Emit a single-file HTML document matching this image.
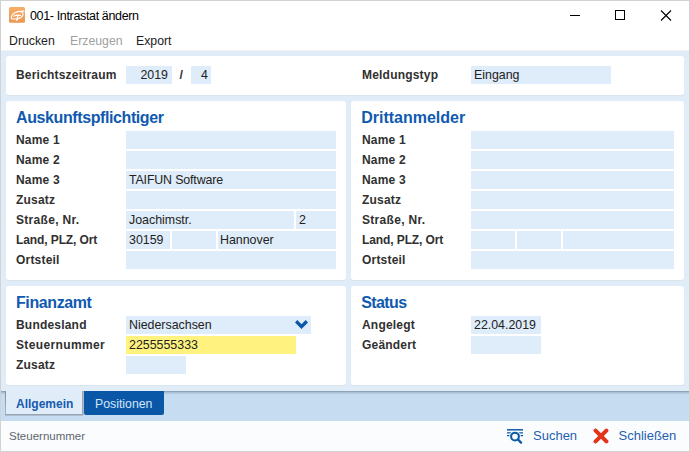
<!DOCTYPE html>
<html><head><meta charset="utf-8">
<style>
*{margin:0;padding:0;box-sizing:border-box}
html,body{width:690px;height:452px;overflow:hidden;background:#fff}
body{position:relative;font-family:"Liberation Sans",sans-serif;font-size:12px;color:#222}
.a{position:absolute;white-space:nowrap}
.brd{position:absolute;background:#d2d2d2}
.main{position:absolute;left:1px;top:51px;width:688px;height:340px;background:#e0edf9}
.pnl{position:absolute;background:#fff;border-radius:3px;box-shadow:0 1px 0 #dbe3eb}
.ttl{position:absolute;font-size:16px;font-weight:bold;color:#0f5ab0;line-height:18px;letter-spacing:-0.4px}
.lbl{position:absolute;font-weight:bold;font-size:12px;color:#303030;line-height:18px;letter-spacing:0.2px}
.fld{position:absolute;background:#dfecf9;height:18px;line-height:18px;font-size:12.4px;color:#222;padding-left:3px;white-space:nowrap}
.tabbar{position:absolute;left:1px;top:391px;width:688px;height:30px;background:#c6dcf0}
.status{position:absolute;left:1px;top:421px;width:688px;height:30px;background:#fbfcfd}
</style></head><body>
<!-- window borders -->
<div class="brd" style="left:0;top:0;width:690px;height:1px"></div>
<div class="brd" style="left:0;top:0;width:1px;height:452px"></div>
<div class="brd" style="left:689px;top:0;width:1px;height:452px"></div>
<div class="brd" style="left:0;top:451px;width:690px;height:1px"></div>

<!-- title bar -->
<svg class="a" style="left:9px;top:7px" width="16" height="16" viewBox="0 0 16 16">
  <defs><linearGradient id="og" x1="0" y1="0" x2="0" y2="1"><stop offset="0" stop-color="#f6ae69"/><stop offset="1" stop-color="#ec9751"/></linearGradient></defs>
  <rect x="0" y="0" width="16" height="15.8" rx="1.5" fill="url(#og)"/>
  <g stroke="#fff" fill="none" stroke-linecap="round">
    <path d="M2.6 11.6 C1.6 9.2 3.8 5.6 9 4.6 L15 4.1" stroke-width="1.1"/>
    <path d="M12.8 5.2 C15 6.2 14.4 9.2 11 10.9 C9 11.9 6 12.3 2.6 11.8" stroke-width="1.1"/>
    <path d="M4.8 9.2 C6.5 8 9.5 8 11.5 8.4" stroke-width="1.2"/>
    <path d="M9 8.4 L7.8 13.3" stroke-width="1.3"/>
  </g>
</svg>
<div class="a" style="left:30px;top:9px;font-size:12.5px;letter-spacing:-0.35px;line-height:14px;color:#000">001- Intrastat ändern</div>
<!-- window controls -->
<div class="a" style="left:570px;top:15px;width:10px;height:1px;background:#000"></div>
<div class="a" style="left:615px;top:10px;width:10px;height:10px;border:1px solid #000"></div>
<svg class="a" style="left:660px;top:10px" width="12" height="11" viewBox="0 0 12 11"><path d="M1 0.5 L11 10.5 M11 0.5 L1 10.5" stroke="#000" stroke-width="1.1"/></svg>

<!-- menu -->
<div class="a" style="left:9px;top:34px;line-height:14px;font-size:12.3px;color:#222">Drucken</div>
<div class="a" style="left:70px;top:34px;line-height:14px;font-size:12.3px;color:#a0a0a0">Erzeugen</div>
<div class="a" style="left:136px;top:34px;line-height:14px;font-size:12.3px;color:#222">Export</div>

<div class="a" style="left:1px;top:50px;width:688px;height:1px;background:#f1f1f0"></div>
<div class="main"></div>

<!-- top panel -->
<div class="pnl" style="left:6px;top:56px;width:678px;height:39px"></div>
<div class="lbl" style="left:16px;top:66px">Berichtszeitraum</div>
<div class="fld" style="left:126px;top:66px;width:46px;text-align:right;padding-right:4px">2019</div>
<div class="a" style="left:179.5px;top:66px;line-height:18px;font-size:12.5px;font-weight:bold;color:#333">/</div>
<div class="fld" style="left:191px;top:66px;width:20px;text-align:right;padding-right:3px">4</div>
<div class="lbl" style="left:362px;top:66px">Meldungstyp</div>
<div class="fld" style="left:471px;top:66px;width:140px">Eingang</div>

<!-- left panel -->
<div class="pnl" style="left:6px;top:101px;width:340px;height:179px"></div>
<div class="ttl" style="left:16px;top:108.5px">Auskunftspflichtiger</div>
<div class="lbl" style="left:16px;top:131px">Name 1</div>
<div class="lbl" style="left:16px;top:151px">Name 2</div>
<div class="lbl" style="left:16px;top:171px">Name 3</div>
<div class="lbl" style="left:16px;top:191px">Zusatz</div>
<div class="lbl" style="left:16px;top:211px;letter-spacing:0.3px">Straße, Nr.</div>
<div class="lbl" style="left:16px;top:231px;letter-spacing:-0.1px">Land, PLZ, Ort</div>
<div class="lbl" style="left:16px;top:251px">Ortsteil</div>
<div class="fld" style="left:126px;top:131px;width:210px"></div>
<div class="fld" style="left:126px;top:151px;width:210px"></div>
<div class="fld" style="left:126px;top:171px;width:210px;letter-spacing:-0.15px">TAIFUN Software</div>
<div class="fld" style="left:126px;top:191px;width:210px"></div>
<div class="fld" style="left:126px;top:211px;width:168px">Joachimstr.</div>
<div class="fld" style="left:296px;top:211px;width:40px">2</div>
<div class="fld" style="left:126px;top:231px;width:44px">30159</div>
<div class="fld" style="left:172px;top:231px;width:44px"></div>
<div class="fld" style="left:218px;top:231px;width:118px;padding-left:2px">Hannover</div>
<div class="fld" style="left:126px;top:251px;width:210px"></div>

<!-- right panel -->
<div class="pnl" style="left:351px;top:101px;width:333px;height:179px"></div>
<div class="ttl" style="left:361.2px;top:108.5px;letter-spacing:0">Drittanmelder</div>
<div class="lbl" style="left:362px;top:131px">Name 1</div>
<div class="lbl" style="left:362px;top:151px">Name 2</div>
<div class="lbl" style="left:362px;top:171px">Name 3</div>
<div class="lbl" style="left:362px;top:191px">Zusatz</div>
<div class="lbl" style="left:362px;top:211px;letter-spacing:0.3px">Straße, Nr.</div>
<div class="lbl" style="left:362px;top:231px;letter-spacing:-0.1px">Land, PLZ, Ort</div>
<div class="lbl" style="left:362px;top:251px">Ortsteil</div>
<div class="fld" style="left:471px;top:131px;width:203px"></div>
<div class="fld" style="left:471px;top:151px;width:203px"></div>
<div class="fld" style="left:471px;top:171px;width:203px"></div>
<div class="fld" style="left:471px;top:191px;width:203px"></div>
<div class="fld" style="left:471px;top:211px;width:203px"></div>
<div class="fld" style="left:471px;top:231px;width:44px"></div>
<div class="fld" style="left:517px;top:231px;width:44px"></div>
<div class="fld" style="left:563px;top:231px;width:111px"></div>
<div class="fld" style="left:471px;top:251px;width:203px"></div>

<!-- Finanzamt -->
<div class="pnl" style="left:6px;top:286px;width:340px;height:99px"></div>
<div class="ttl" style="left:16px;top:293.5px">Finanzamt</div>
<div class="lbl" style="left:16px;top:316px">Bundesland</div>
<div class="lbl" style="left:16px;top:336px;letter-spacing:0.36px">Steuernummer</div>
<div class="lbl" style="left:16px;top:356px">Zusatz</div>
<div class="fld" style="left:126px;top:316px;width:185px">Niedersachsen</div>
<svg class="a" style="left:294px;top:319px" width="15" height="11" viewBox="0 0 15 11"><polygon points="1,3.4 3.3,1.1 7.5,5.3 11.7,1.1 14,3.4 7.5,9.9" fill="#0b58a8"/></svg>
<div class="fld" style="left:126px;top:336px;width:170px;background:#fff27f">2255555333</div>
<div class="fld" style="left:126px;top:356px;width:60px"></div>

<!-- Status -->
<div class="pnl" style="left:351px;top:286px;width:333px;height:99px"></div>
<div class="ttl" style="left:361.2px;top:293.5px;letter-spacing:-0.6px">Status</div>
<div class="lbl" style="left:362px;top:316px">Angelegt</div>
<div class="lbl" style="left:362px;top:336px">Geändert</div>
<div class="fld" style="left:471px;top:316px;width:70px">22.04.2019</div>
<div class="fld" style="left:471px;top:336px;width:70px"></div>

<!-- tab bar -->
<div class="tabbar"></div>
<div class="a" style="left:1px;top:391px;width:688px;height:4px;background:linear-gradient(#8195a8,#a8bdd1 35%,#bcd2e7 70%,#c6dcf0)"></div>
<div class="a" style="left:5px;top:391px;width:1px;height:24px;background:linear-gradient(#7f8e9d,#a9b8c6)"></div>
<div class="a" style="left:5px;top:414px;width:78px;height:2px;background:linear-gradient(#8d9aa8,#b7c9da)"></div>
<div class="a" style="left:82px;top:391px;width:2px;height:24px;background:linear-gradient(90deg,#8f9caa,#b4c5d6)"></div>
<div class="a" style="left:6px;top:391px;width:76px;height:23px;background:#e0edf9"></div>
<div class="a" style="left:16px;top:397px;font-size:12px;line-height:14px;color:#1559b0;font-weight:bold">Allgemein</div>
<div class="a" style="left:84px;top:391px;width:80px;height:24px;background:#0a57a8;border-radius:0 0 2px 2px"></div>
<div class="a" style="left:95px;top:397px;font-size:12.3px;line-height:14px;color:#d3e5f8">Positionen</div>

<!-- status bar -->
<div class="status"></div>
<div class="a" style="left:9px;top:429px;font-size:11.5px;line-height:14px;color:#5d6670">Steuernummer</div>
<svg class="a" style="left:507px;top:428px" width="16" height="16" viewBox="0 0 16 16">
  <g stroke="#0d5aa7" fill="none">
    <path d="M0 1.8 H16" stroke-width="1.5"/>
    <path d="M0 4.8 H4 M12 4.8 H16 M0 7.6 H3 M13 7.6 H16" stroke-width="1.3"/>
    <circle cx="8" cy="8.6" r="4" stroke="#fbfcfd" stroke-width="3.6"/><circle cx="8" cy="8.6" r="3.9" stroke-width="2.1"/>
    <path d="M11 11.5 L14 14.6" stroke-width="2.4" stroke-linecap="round"/>
  </g>
</svg>
<div class="a" style="left:533px;top:429px;font-size:13px;line-height:14px;color:#1e5fb0">Suchen</div>
<svg class="a" style="left:593px;top:428px" width="16" height="16" viewBox="0 0 16 16">
  <path d="M2.6 2.6 L13.4 13.4 M13.4 2.6 L2.6 13.4" stroke="#e2341d" stroke-width="4.1" stroke-linecap="round"/>
</svg>
<div class="a" style="left:618.5px;top:429px;font-size:13px;line-height:14px;color:#1e5fb0">Schließen</div>
</body></html>
